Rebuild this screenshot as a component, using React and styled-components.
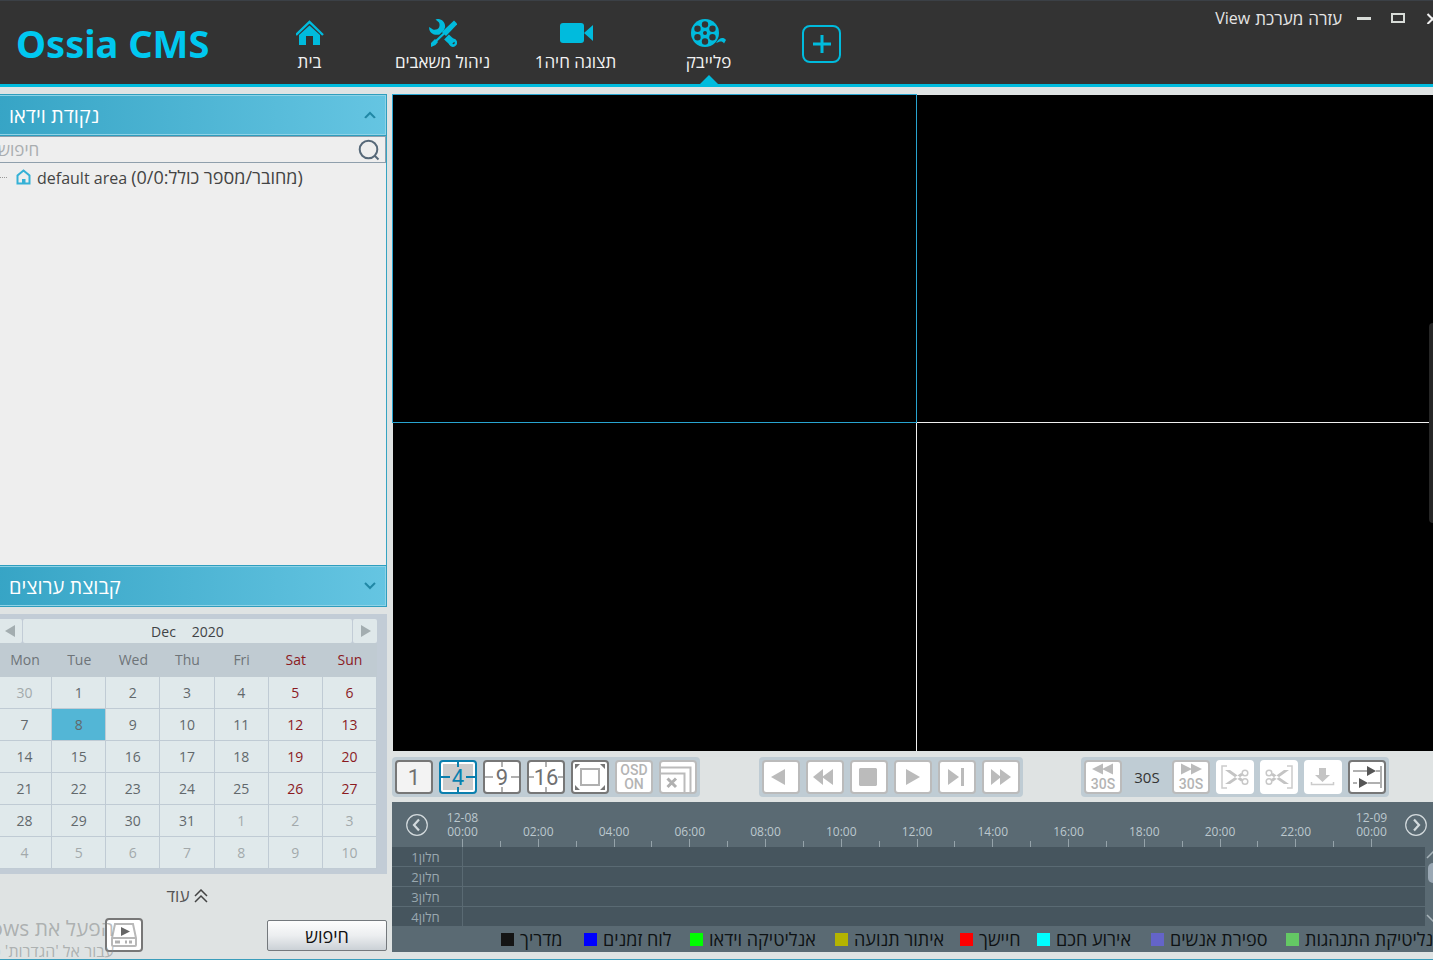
import React from "react";
import styled, { createGlobalStyle, css } from "styled-components";

const GlobalStyle = createGlobalStyle`
  * { box-sizing: border-box; }
  html, body { margin: 0; padding: 0; }
  body {
    background: #dfe3e3;
    font-family: "Open Sans", "Noto Sans", "Liberation Sans", sans-serif;
    font-size: 17px;
    overflow: hidden;
  }
  button, input { font: inherit; color: inherit; }
  button { padding: 0; margin: 0; border: 0; background: none; cursor: pointer; }
  svg { display: block; flex: none; }
`;

/* The maximised window runs 8px past both sides of the screen. */
const Screen = styled.div`
  overflow: hidden;
  position: relative;
  min-height: 100vh;
  display: flex;
`;

const Frame = styled.div`
  flex: 1;
  min-width: 0;
  margin: 0 -8px;
  display: flex;
  flex-direction: column;
  border-bottom: 1px solid #3a9dbb;
`;

const Header = styled.header`
  display: flex;
  height: 87px;
  background: #333333;
  border-top: 1px solid #3b4046;
  border-bottom: 3px solid #00bbdd;
`;

const Logo = styled.h1`
  width: 251px;
  margin: 0;
  padding-left: 24px;
  color: #00c8f0;
  font-family: "Noto Sans", "Open Sans", sans-serif;
  font-size: 38px;
  font-weight: 700;
  line-height: 84px;
  white-space: nowrap;
`;

const Nav = styled.nav`
  display: flex;
`;

const NavItem = styled.button`
  position: relative;
  width: 133px;
  padding-top: 16px;
  display: flex;
  flex-direction: column;
  align-items: center;
  color: #f2f2f2;
  line-height: 26px;
  ${(p) =>
    p.$active &&
    css`
      &::after {
        content: "";
        position: absolute;
        bottom: 0;
        left: 50%;
        margin-left: -9px;
        border: 9px solid transparent;
        border-top-width: 0;
        border-bottom-color: #00bbdd;
      }
    `}
`;

const NavIcon = styled.span`
  height: 32px;
  display: flex;
  align-items: center;
`;

const AddButton = styled.button`
  width: 39px;
  height: 38px;
  margin: 24px 0 0 27px;
  border: 2px solid #00bbdd;
  border-radius: 8px;
  display: flex;
  align-items: center;
  justify-content: center;
`;

const TopRight = styled.div`
  margin-left: auto;
  height: 34px;
  display: flex;
  align-items: center;
  color: #e6e6e6;
`;

const MenuBar = styled.div`
  display: flex;
  gap: 5px;
  margin-right: 15px;
`;

const MenuItem = styled.button`
  font-size: ${(p) => (p.$latin ? 16 : 17)}px;
`;

const WindowButtons = styled.div`
  display: flex;
  align-items: center;
  gap: 20px;
`;

const Main = styled.main`
  flex: 1;
  display: flex;
  gap: 5px;
  padding: 7px 0;
`;

const Sidebar = styled.aside`
  width: 395px;
  flex: none;
  display: flex;
  flex-direction: column;
`;

const Panel = styled.section`
  flex: 1;
  display: flex;
  flex-direction: column;
  background: #eeeeee;
  border-right: 1px solid #34a3c2;
  margin-bottom: 7px;
`;

const PanelHeader = styled.button`
  height: 42px;
  margin-right: -1px;
  padding: 0 10px 0 16px;
  display: flex;
  align-items: center;
  justify-content: space-between;
  color: #ffffff;
  font-size: 20px;
  border: 1px solid #2f9ebe;
  background: linear-gradient(90deg, #36a4c5, #65c5e2);
  box-shadow: inset 0 0 0 1px #8fd2e6;
`;

const SearchBox = styled.label`
  height: 27px;
  display: flex;
  align-items: center;
  border: 1px solid #8f9fac;
  border-left: 0;
  padding-right: 5px;
`;

const SearchInput = styled.input`
  flex: 1;
  min-width: 0;
  border: 0;
  outline: 0;
  padding: 0 0 0 6px;
  background: transparent;
  &::placeholder { color: #a9adb0; opacity: 1; }
`;

const Tree = styled.ul`
  flex: 1;
  margin: 0;
  padding: 0;
  list-style: none;
  color: #444444;
`;

const TreeItem = styled.li`
  height: 28px;
  display: flex;
  align-items: center;
  gap: 6px;
  white-space: nowrap;
  line-height: 26px;
  font-size: 16px;
  &::before {
    content: "";
    width: 15px;
    margin-right: 3px;
    border-top: 1px dotted #999999;
  }
`;

const TreeCount = styled.span`
  font-size: 18px;
`;

const Calendar = styled.section`
  background: #c2ccd6;
  padding: 5px 10px 5px 6px;
`;

const MonthBar = styled.div`
  display: flex;
  gap: 1px;
  height: 24px;
`;

const MonthPart = styled.div`
  background: #dfe8ea;
  border-radius: 2px;
  display: flex;
  align-items: center;
  justify-content: center;
  gap: 16px;
  color: #3f4346;
  font-size: 14px;
  flex: 1;
`;

const MonthStep = styled(MonthPart).attrs({ as: "button" })`
  flex: none;
  width: 24px;
`;

const MonthTable = styled.table`
  width: 100%;
  table-layout: fixed;
  border-collapse: separate;
  border-spacing: 0;
  font-size: 14px;
  color: #62686b;
`;

const DayName = styled.th`
  height: 34px;
  padding: 0 0 2px;
  font-weight: 400;
  background: #c0cbd2;
  color: ${(p) => (p.$weekend ? "#8b1a1f" : "#6e7478")};
`;

const DayCell = styled.td`
  height: 32px;
  padding: 0;
  background: ${(p) => (p.$selected ? "#53b6d6" : "#e0e9eb")};
  border-right: 1px solid #c0cbd4;
  border-bottom: 1px solid #c0cbd4;
`;

const DayButton = styled.button`
  display: block;
  width: 100%;
  height: 31px;
  color: ${(p) => (p.$muted ? "#a3a9ab" : p.$weekend ? "#8b1a1f" : "#62686b")};
`;

const More = styled.button`
  height: 43px;
  padding-right: 4px;
  display: flex;
  align-items: center;
  justify-content: center;
  gap: 5px;
  color: #555555;
`;

const SidebarFooter = styled.div`
  height: 35px;
  padding-left: 113px;
  display: flex;
  justify-content: space-between;
  align-items: flex-end;
`;

const SearchButton = styled.button`
  width: 120px;
  height: 31px;
  margin-bottom: 1px;
  border: 1px solid #74797d;
  border-radius: 2px;
  background: linear-gradient(#fdfdfd, #eceef0 50%, #cbd1d6);
  color: #111111;
  font-size: 18px;
  line-height: 28px;
`;

const Content = styled.section`
  flex: 1;
  min-width: 0;
  display: flex;
  flex-direction: column;
`;

const VideoWall = styled.div`
  position: relative;
  flex: 1;
  display: grid;
  grid-template-columns: 1fr 1fr;
  grid-template-rows: 329fr 328fr;
  background: #000000;
  border-left: 1px solid #dfe3e3;
`;

const VideoCell = styled.div`
  background: #000000;
  ${(p) => p.$edge && css`border-top: 1px solid #dfe3e3;`}
  ${(p) =>
    p.$lined &&
    css`
      margin: -1px 0 0 -1px;
      border: solid #f0f0f0;
      border-width: 1px 0 0 1px;
    `}
  ${(p) =>
    p.$selected &&
    css`
      margin-left: -1px;
      border: 1px solid #28a4d0;
      z-index: 1;
    `}
`;

const SideHandle = styled.button`
  position: absolute;
  right: 0;
  top: 50%;
  width: 12px;
  height: 200px;
  margin-top: -100px;
  border-radius: 4px;
  background: #262626;
  z-index: 2;
`;

const Toolbar = styled.div`
  height: 51px;
  padding-right: 52px;
  display: flex;
  align-items: center;
  justify-content: space-between;
`;

const ToolGroup = styled.div`
  display: flex;
  gap: 6px;
  padding: 3px;
  border-radius: 4px;
  background: #bfccd4;
`;

const toolBorders = { strong: "#777777", active: "#0a7fae", soft: "#bbbbbb", none: "#ffffff" };

const ToolButton = styled.button`
  width: 38px;
  height: 34px;
  border: 2px solid ${(p) => toolBorders[p.$tone]};
  border-radius: 4px;
  background: ${(p) => (p.$plain ? "#f3f3f3" : "#ffffff")};
`;

const StepLabel = styled.span`
  width: 38px;
  line-height: 34px;
  text-align: center;
  color: #333333;
  font-size: 15px;
`;

const Timeline = styled.div`
  background: #5a6a73;
  color: #bcc8ce;
  font-size: 12px;
`;

const TimeHeader = styled.div`
  height: 45px;
  display: flex;
`;

const ArrowCell = styled.div`
  width: ${(p) => (p.$end ? 69 : 70)}px;
  padding: 12px 0 0 ${(p) => (p.$end ? 33 : 14)}px;
`;

const Ruler = styled.div`
  flex: 1;
  display: flex;
  justify-content: space-between;
  align-items: flex-end;
`;

const Tick = styled.div`
  width: 1px;
  display: flex;
  flex-direction: column;
  align-items: center;
  line-height: 14px;
  white-space: nowrap;
  text-align: center;
  &::after {
    content: "";
    width: 1px;
    height: ${(p) => (p.$major ? 8 : 6)}px;
    background: #95a3aa;
  }
`;

const Tracks = styled.div`
  display: flex;
`;

const TrackList = styled.div`
  flex: 1;
  height: 79px;
`;

const Track = styled.div`
  display: flex;
  height: 20px;
  background: #46555e;
  border-bottom: 1px solid #5a6a73;
  line-height: 20px;
  color: #9aa8b0;
  &:last-child { border-bottom: 0; height: 19px; }
`;

const TrackLabel = styled.div`
  width: 71px;
  padding-right: 3px;
  text-align: center;
  font-size: 13px;
  border-right: 1px solid #5a6a73;
`;

const TrackScroll = styled.div`
  width: 16px;
  padding: 4px 0;
  display: flex;
  flex-direction: column;
  align-items: center;
`;

const ScrollThumb = styled.div`
  width: 10px;
  height: 20px;
  margin: 4px 0 auto;
  border-radius: 5px;
  background: #9aa8b4;
`;

const Legend = styled.ul`
  height: 26px;
  margin: 0;
  padding: 0 0 0 109px;
  list-style: none;
  display: grid;
  grid-template-columns: 83px 106px 145px 125px 77px 114px 135px 1fr;
  align-items: center;
  color: #0e1214;
  font-size: 18px;
  line-height: 26px;
`;

const LegendItem = styled.li`
  display: flex;
  align-items: center;
  gap: 6px;
  white-space: nowrap;
  &::before {
    content: "";
    flex: none;
    width: 13px;
    height: 13px;
    background: ${(p) => p.$color};
  }
`;

const Watermark = styled.div`
  position: absolute;
  right: calc(100% - 114px);
  bottom: 0;
  direction: rtl;
  white-space: nowrap;
  pointer-events: none;
  color: rgba(130, 134, 134, 0.55);
  font-size: 16px;
  line-height: 18px;
`;

const WatermarkTitle = styled.div`
  font-size: 21px;
  line-height: 28px;
`;

const C = "#00bbdd";

const HomeIcon = () => (
  <svg width="28" height="26" viewBox="0 0 28 26">
    <path d="M0 15 13.500 2 27 15" fill="none" stroke={C} strokeWidth="2.400" />
    <path d="M3 15 13.500 5.500 24 15V25H17V16H10V25H3Z" fill={C} />
  </svg>
);

const ToolsIcon = () => (
  <svg width="28" height="28" viewBox="0 0 28 28">
    <path d="M6.500 .5C11-1.500 17 2.500 16 8.500L15 11 10.500 15.500C5 17 -.5 13.500 .2 8L4 10.500C6 11 9 10.500 10 8.500 11 6 10.500 4 9.500 3Z" fill={C} />
    <path d="M17.500 18 24 24" stroke={C} strokeWidth="7" />
    <path d="M24 19.500a4.200 4.200 0 1 1-.1 0ZM24.300 22.500a1.400 1.400 0 1 0 .1 0Z" fill={C} fillRule="evenodd" />
    <path d="M25 1.500 28.500 5 17 17 12.800 13Z" fill={C} />
    <path d="M15.500 14 6 23" stroke={C} strokeWidth="2.400" />
    <path d="M6 20 9 23 6.500 26 2 28V24Z" fill={C} />
  </svg>
);

const CameraIcon = () => (
  <svg width="34" height="22" viewBox="0 0 34 22">
    <rect x="1" y="1" width="24" height="20" rx="3" fill={C} />
    <path d="M25 11 34 3V19Z" fill={C} />
  </svg>
);

const reelHoles = [[14, 5.500], [21.500, 9.800], [21.500, 18.200], [14, 22.500], [6.500, 18.200], [6.500, 9.800]];

const ReelIcon = () => (
  <svg width="35" height="28" viewBox="0 0 35 28">
    <circle cx="14" cy="14" r="14" fill={C} />
    {reelHoles.map(([x, y]) => (
      <circle key={`${x}-${y}`} cx={x} cy={y} r="3.200" fill="#333333" />
    ))}
    <circle cx="14" cy="14" r="2" fill="#333333" />
    <path d="M25 24C28 19 32 17.500 35 21L33 24.500C31 21.500 29 22.500 25 24Z" fill={C} />
  </svg>
);

const Chevron = ({ up }) => (
  <svg width="12" height="8" viewBox="0 0 12 8">
    <path d={up ? "M1 8 6 3 11 8" : "M1 2 6 7 11 2"} fill="none" stroke="#9adcee" strokeWidth="1" />
    <path d={up ? "M1 7 6 2 11 7" : "M1 1 6 6 11 1"} fill="none" stroke="#1f87a5" strokeWidth="2" />
  </svg>
);

const SearchIcon = () => (
  <svg width="22" height="22" viewBox="0 0 22 22" fill="none" stroke="#566878" strokeWidth="2">
    <circle cx="10.500" cy="10.500" r="8.800" />
    <path d="M16.500 16.500 20.500 20.500" />
  </svg>
);

const AreaIcon = () => (
  <svg width="15" height="16" viewBox="0 0 15 16">
    <path d="M1.500 14.500V6.500L7.500 1.500 13.500 6.500V14.500Z" fill="none" stroke="#35b1d6" strokeWidth="2" />
    <path d="M6 14V10H9.500V14" fill="#35b1d6" />
  </svg>
);

const Glyph = ({ children }) => (
  <svg width="34" height="30" viewBox="0 0 34 30">{children}</svg>
);

const Digits = ({ fill = "#707070", children }) => (
  <text x="17" y="23" textAnchor="middle" fontFamily="Roboto" fontSize="22" fontWeight="400" fill={fill}>
    {children}
  </text>
);

const GridGlyph = ({ n, active, reach = 8 }) => (
  <Glyph>
    {active && <rect x="2" y="2" width="30" height="26" fill="#cccccc" />}
    <path
      d={`M0 15H${reach}M${34 - reach} 15H34M17 0V5M17 25V30`}
      stroke={active ? "#0a7fae" : "#b0b0b0"}
      strokeWidth="2"
    />
    <Digits fill={active ? "#0a7fae" : undefined}>{n}</Digits>
  </Glyph>
);

const Soft = ({ d }) => (
  <Glyph>
    <path d={d} fill="#bbbbbb" />
  </Glyph>
);

const SkipGlyph = ({ forward }) => (
  <Glyph>
    <path
      d={forward ? "M28 7 17 1.500V12.500ZM18 7 7 1.500V12.500Z" : "M6 7 17 1.500V12.500ZM16 7 27 1.500V12.500Z"}
      fill="#bbbbbb"
    />
    <text x="17" y="27" textAnchor="middle" fontFamily="Roboto" fontSize="14" fontWeight="500" fill="#b4b4b4">30S</text>
  </Glyph>
);

const ScissorsGlyph = ({ mirrored }) => (
  <Glyph>
    <g transform={mirrored ? "translate(34 0) scale(-1 1)" : undefined}>
      <path d="M9 4H4V26H9" fill="none" stroke="#cccccc" strokeWidth="1.500" />
      <path d="M7 8 12 8 26 18 23 19.500ZM7 22 12 22 26 12.500 23 11Z" fill="#c4c4c4" />
      <g fill="none" stroke="#c8c8c8" strokeWidth="1.500">
        <circle cx="27" cy="11" r="2.800" />
        <circle cx="27" cy="19.500" r="2.800" />
      </g>
    </g>
  </Glyph>
);

const RoundArrow = ({ right }) => (
  <svg width="22" height="22" viewBox="0 0 22 22" fill="none" stroke="#d3dadd">
    <circle cx="11" cy="11" r="10.300" strokeWidth="1.200" />
    <path d={right ? "M9 5.500 14 11 9 16.500" : "M13 5.500 8 11 13 16.500"} strokeWidth="2.200" />
  </svg>
);

const ScrollArrow = ({ down }) => (
  <svg width="14" height="8" viewBox="0 0 14 8">
    <path d={down ? "M1 1 7 7 13 1" : "M1 7 7 1 13 7"} fill="none" stroke="#a9b5bb" strokeWidth="1.500" />
  </svg>
);

const dayNames = ["Mon", "Tue", "Wed", "Thu", "Fri", "Sat", "Sun"];
const weeks = [
  [30, 1, 2, 3, 4, 5, 6],
  [7, 8, 9, 10, 11, 12, 13],
  [14, 15, 16, 17, 18, 19, 20],
  [21, 22, 23, 24, 25, 26, 27],
  [28, 29, 30, 31, 1, 2, 3],
  [4, 5, 6, 7, 8, 9, 10],
];
const isMuted = (week, day) => (week === 0 && day > 20) || (week > 3 && day < 20);

const layouts = [
  { label: "1", tone: "strong", plain: true, glyph: <Glyph><Digits>1</Digits></Glyph> },
  { label: "4", tone: "active", glyph: <GridGlyph n="4" active reach={9} /> },
  { label: "9", tone: "strong", glyph: <GridGlyph n="9" /> },
  { label: "16", tone: "strong", glyph: <GridGlyph n="16" reach={5} /> },
  { label: "Full screen", tone: "strong", glyph: (
    <Glyph>
      <rect x="8" y="7" width="18" height="16" fill="none" stroke="#b0b0b0" strokeWidth="2" />
      <path d="M2 2H7L2 7ZM32 2H27L32 7ZM2 28H7L2 23ZM32 28H27L32 23Z" fill="#777777" />
    </Glyph>
  ) },
  { label: "OSD", tone: "soft", glyph: (
    <Glyph>
      <g textAnchor="middle" fontFamily="Roboto" fontSize="14" fontWeight="500" fill="#b4b4b4">
        <text x="17" y="13">OSD</text>
        <text x="17" y="27">ON</text>
      </g>
    </Glyph>
  ) },
  { label: "Close all", tone: "soft", glyph: (
    <Glyph>
      <path d="M0 5.500H29.500V30M0 11.500H23.500V30" fill="none" stroke="#bbbbbb" strokeWidth="2" />
      <path d="M6.500 16.500 15 25M15 16.500 6.500 25" stroke="#b0b0b0" strokeWidth="3" />
    </Glyph>
  ) },
];

const transport = [
  { label: "Play backward", d: "M21 7V23L7 15Z" },
  { label: "Rewind", d: "M5 15 15 7V23ZM14 15 25 7V23Z" },
  { label: "Stop", d: "M8 6H24L25 7V23L24 24H8L7 23V7Z" },
  { label: "Play", d: "M10 7 24 15 10 23Z" },
  { label: "Next frame", d: "M8 7 19 15 8 23ZM21 6H24V24H21Z" },
  { label: "Fast forward", d: "M7 7 17 15 7 23ZM16 7 27 15 16 23Z" },
];

const hours = Array.from({ length: 25 }, (_, i) => i);
const hourLabel = (h) => `${String(h % 24).padStart(2, "0")}:00`;

const legend = [
  ["#141414", "מדריך"],
  ["#0000ff", "לוח זמנים"],
  ["#00ff00", "אנליטיקה וידאו"],
  ["#b4b400", "איתור תנועה"],
  ["#ff0000", "חיישך"],
  ["#00ffff", "אירוע חכם"],
  ["#6464c8", "ספירת אנשים"],
  ["#64c864", "אנליטיקת התנהגות"],
];

export default function App() {
  return (
    <Screen>
      <GlobalStyle />
      <Frame>
        <Header>
          <Logo>Ossia CMS</Logo>
          <Nav>
            <NavItem><NavIcon><HomeIcon /></NavIcon>בית</NavItem>
            <NavItem><NavIcon><ToolsIcon /></NavIcon>ניהול משאבים</NavItem>
            <NavItem><NavIcon><CameraIcon /></NavIcon>תצוגה חיה1</NavItem>
            <NavItem $active><NavIcon><ReelIcon /></NavIcon>פלייבק</NavItem>
          </Nav>
          <AddButton aria-label="Add">
            <svg width="20" height="20" viewBox="0 0 20 20">
              <path d="M10 1V19M1 10H19" stroke={C} strokeWidth="3" />
            </svg>
          </AddButton>
          <TopRight>
            <MenuBar>
              <MenuItem $latin>View</MenuItem>
              <MenuItem>מערכת</MenuItem>
              <MenuItem>עזרה</MenuItem>
            </MenuBar>
            <WindowButtons>
              <button aria-label="Minimize">
                <svg width="14" height="10" viewBox="0 0 14 10"><path d="M0 5.500H14" stroke="#d8dcd8" strokeWidth="3" /></svg>
              </button>
              <button aria-label="Maximize">
                <svg width="14" height="10" viewBox="0 0 14 10"><path d="M1 1H13V9H1Z" fill="none" stroke="#d8dcd8" strokeWidth="2" /></svg>
              </button>
              <button aria-label="Close">
                <svg width="16" height="12" viewBox="0 0 16 12"><path d="M2.500 2 12.500 12M12.500 2 2.500 12" stroke="#f2f2f2" strokeWidth="2" /></svg>
              </button>
            </WindowButtons>
          </TopRight>
        </Header>

        <Main>
          <Sidebar>
            <Panel>
              <PanelHeader>נקודת וידאו<Chevron up /></PanelHeader>
              <SearchBox>
                <SearchInput type="text" placeholder="חיפוש" aria-label="חיפוש" />
                <SearchIcon />
              </SearchBox>
              <Tree>
                <TreeItem>
                  <AreaIcon />
                  <span>default area <TreeCount>(מחובר/מספר כולל:0/0)</TreeCount></span>
                </TreeItem>
              </Tree>
              <PanelHeader>קבוצת ערוצים<Chevron /></PanelHeader>
            </Panel>

            <Calendar>
              <MonthBar>
                <MonthStep aria-label="Previous month">
                  <svg width="11" height="12" viewBox="0 0 11 12"><path d="M10 0V12L0 6Z" fill="#a3adb0" /></svg>
                </MonthStep>
                <MonthPart><span>Dec</span><span>2020</span></MonthPart>
                <MonthStep aria-label="Next month">
                  <svg width="11" height="12" viewBox="0 0 11 12"><path d="M1 0V12L11 6Z" fill="#a3adb0" /></svg>
                </MonthStep>
              </MonthBar>
              <MonthTable>
                <thead>
                  <tr>
                    {dayNames.map((name, i) => (
                      <DayName key={name} scope="col" $weekend={i > 4}>{name}</DayName>
                    ))}
                  </tr>
                </thead>
                <tbody>
                  {weeks.map((week, w) => (
                    <tr key={w}>
                      {week.map((day, i) => (
                        <DayCell key={i} $selected={w === 1 && day === 8}>
                          <DayButton $weekend={i > 4} $muted={isMuted(w, day)}>{day}</DayButton>
                        </DayCell>
                      ))}
                    </tr>
                  ))}
                </tbody>
              </MonthTable>
            </Calendar>

            <More>
              עוד
              <svg width="14" height="14" viewBox="0 0 14 14">
                <path d="M1 7 7 1 13 7M1 13 7 7 13 13" fill="none" stroke="#444444" strokeWidth="1.500" />
              </svg>
            </More>
            <SidebarFooter>
              <ToolButton $tone="strong" aria-label="Local playback">
                <Glyph>
                  <path d="M8 4H26L29 18V25Q29 26 28 26H6Q5 26 5 25V18ZM5 18H29" fill="none" stroke="#b8b8b8" strokeWidth="2" />
                  <path d="M8 22H13M18 22H20M22 22H25" stroke="#b0b0b0" strokeWidth="3" />
                  <path d="M14 7 23 11.500 14 16Z" fill="#666666" />
                </Glyph>
              </ToolButton>
              <SearchButton>חיפוש</SearchButton>
            </SidebarFooter>
          </Sidebar>

          <Content>
            <VideoWall>
              <VideoCell $selected />
              <VideoCell $edge />
              <VideoCell />
              <VideoCell $lined />
              <SideHandle aria-label="Open side panel" />
            </VideoWall>

            <Toolbar>
              <ToolGroup>
                {layouts.map((b) => (
                  <ToolButton key={b.label} aria-label={b.label} $tone={b.tone} $plain={b.plain}>{b.glyph}</ToolButton>
                ))}
              </ToolGroup>
              <ToolGroup>
                {transport.map((b) => (
                  <ToolButton key={b.label} aria-label={b.label} $tone="soft"><Soft d={b.d} /></ToolButton>
                ))}
              </ToolGroup>
              <ToolGroup>
                <ToolButton $tone="soft" aria-label="Back 30 seconds"><SkipGlyph /></ToolButton>
                <StepLabel>30S</StepLabel>
                <ToolButton $tone="soft" aria-label="Forward 30 seconds"><SkipGlyph forward /></ToolButton>
                <ToolButton $tone="none" aria-label="Clip start"><ScissorsGlyph /></ToolButton>
                <ToolButton $tone="none" aria-label="Clip end"><ScissorsGlyph mirrored /></ToolButton>
                <ToolButton $tone="none" aria-label="Download">
                  <Glyph>
                    <path d="M13 6H20V13H24L16.500 20 9 13H13Z" fill="#c4c4c4" />
                    <path d="M5.500 20V22.500H27.500V20" fill="none" stroke="#cccccc" strokeWidth="1.500" />
                  </Glyph>
                </ToolButton>
                <ToolButton $tone="strong" aria-label="Synchronous playback">
                  <Glyph>
                    <path d="M3 9H17M26 9H30M3 21H7M18 21H30M31 4V26" stroke="#b0b0b0" strokeWidth="2" />
                    <path d="M17 4 26 9 17 14ZM9 16 18 21 9 26Z" fill="#555555" />
                  </Glyph>
                </ToolButton>
              </ToolGroup>
            </Toolbar>

            <Timeline>
              <TimeHeader>
                <ArrowCell><button aria-label="Earlier"><RoundArrow /></button></ArrowCell>
                <Ruler>
                  {hours.map((h) => (
                    <Tick key={h} $major={h % 2 === 0}>
                      {h === 0 && <span>12-08</span>}
                      {h === 24 && <span>12-09</span>}
                      {h % 2 === 0 && <span>{hourLabel(h)}</span>}
                    </Tick>
                  ))}
                </Ruler>
                <ArrowCell $end><button aria-label="Later"><RoundArrow right /></button></ArrowCell>
              </TimeHeader>
              <Tracks>
                <TrackList>
                  {[1, 2, 3, 4].map((n) => (
                    <Track key={n}><TrackLabel>{`חלון${n}`}</TrackLabel></Track>
                  ))}
                </TrackList>
                <TrackScroll>
                  <ScrollArrow />
                  <ScrollThumb />
                  <ScrollArrow down />
                </TrackScroll>
              </Tracks>
              <Legend>
                {legend.map(([color, text]) => (
                  <LegendItem key={text} $color={color}>{text}</LegendItem>
                ))}
              </Legend>
            </Timeline>
          </Content>
        </Main>
      </Frame>
      <Watermark>
        <WatermarkTitle>הפעל את Windows</WatermarkTitle>
        עבור אל 'הגדרות' כדי להפעיל את Windows.
      </Watermark>
    </Screen>
  );
}
